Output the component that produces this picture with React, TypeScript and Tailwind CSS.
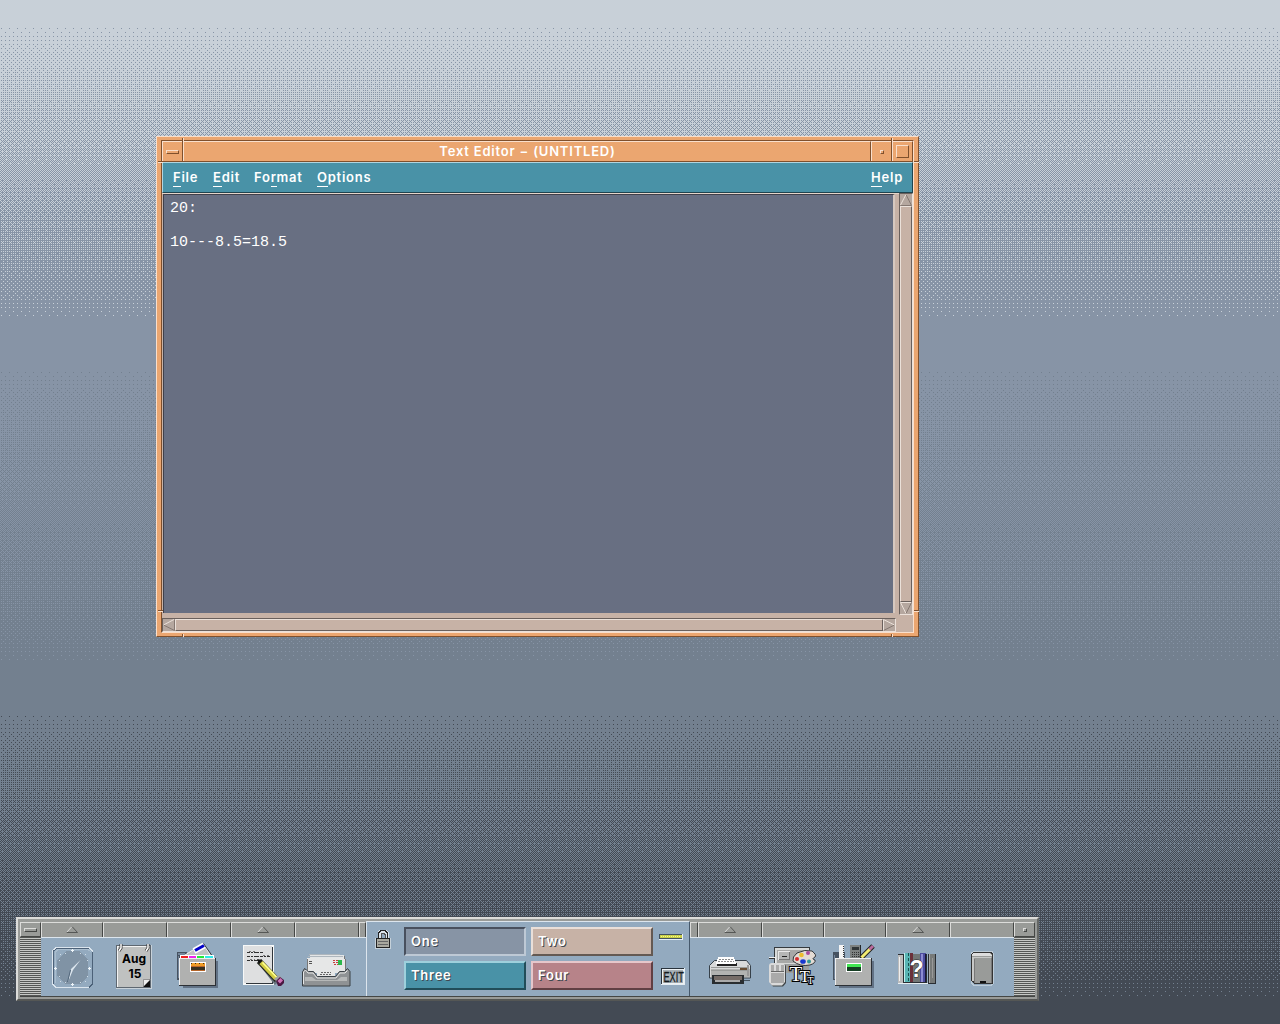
import React from 'react';

const BAYER = [
  [0, 32, 8, 40, 2, 34, 10, 42],
  [48, 16, 56, 24, 50, 18, 58, 26],
  [12, 44, 4, 36, 14, 46, 6, 38],
  [60, 28, 52, 20, 62, 30, 54, 22],
  [3, 35, 11, 43, 1, 33, 9, 41],
  [51, 19, 59, 27, 49, 17, 57, 25],
  [15, 47, 7, 39, 13, 45, 5, 37],
  [63, 31, 55, 23, 61, 29, 53, 21],
];

const BANDS = [
  { from: 22, to: 320, ink: '#8794a6' },
  { from: 366, to: 664, ink: '#73808f' },
  { from: 706, to: 1004, ink: '#434a54' },
];

function ditherPath(from: number, to: number) {
  let d = '';
  for (let y = from; y < 1024; y++) {
    const level = ((y - from) / (to - from)) * 64;
    for (let x = 0; x < 8; x++) {
      if (BAYER[(y + 4) % 8][(x + 7) % 8] < level - 0.5) d += `M${x} ${y}h1v1h-1z`;
    }
  }
  return d;
}

const LAYERS = BANDS.map((b) => ({ ...b, d: ditherPath(b.from, b.to) }));

function Backdrop() {
  return (
    <svg className="absolute inset-0" width="1280" height="1024" shapeRendering="crispEdges">
      <defs>
        <pattern id="dither" width="8" height="1024" patternUnits="userSpaceOnUse">
          <rect width="8" height="1024" fill="#c8d0d8" />
          {LAYERS.map((l) => (
            <path key={l.from} d={l.d} fill={l.ink} />
          ))}
        </pattern>
      </defs>
      <rect width="1280" height="1024" fill="url(#dither)" />
    </svg>
  );
}

function Menu({ pre = '', hot, post, className = '' }: { pre?: string; hot: string; post: string; className?: string }) {
  return (
    <span className={`whitespace-pre ${className}`}>
      {pre}
      <span className="relative inline-block">
        {hot}
        <span className="absolute left-0 right-0 bottom-[-1px] h-px bg-white" />
      </span>
      {post}
    </span>
  );
}

function Arrow({ dir, className = '' }: { dir: 'up' | 'down' | 'left' | 'right'; className?: string }) {
  const L = '#ebe1da';
  const D = '#857872';
  return (
    <svg className={`block shrink-0 ${className}`} width="12" height="12" viewBox="0 0 12 12" fill="none">
      {dir === 'up' && (<><path d="M6 .5L11.5 11.5H.5z" fill="#b5a79f" /><path d="M.5 11.5H11.5L6 .5" stroke={D} /><path d="M.5 11L6 .5" stroke={L} /></>)}
      {dir === 'down' && (<><path d="M.5 .5H11.5L6 11.5z" fill="#b5a79f" /><path d="M11.5 .5L6 11.5" stroke={D} /><path d="M6 11.5L.5 .5H11" stroke={L} /></>)}
      {dir === 'left' && (<><path d="M.5 6L11.5 .5V11.5z" fill="#b5a79f" /><path d="M11.5 .5V11.5L.5 6" stroke={D} /><path d="M.5 6L11 .5" stroke={L} /></>)}
      {dir === 'right' && (<><path d="M.5 .5L11.5 6L.5 11.5z" fill="#b5a79f" /><path d="M.5 11.5L11.5 6" stroke={D} /><path d="M.5 11.5V.5L11.5 6" stroke={L} /></>)}
    </svg>
  );
}

function EditorWindow() {
  return (
    <section className="absolute left-[156px] top-[136px] flex h-[501px] w-[763px] flex-col border border-t-[#f9dfcc] border-l-[#f9dfcc] border-r-[#80502c] border-b-[#80502c] bg-[#eba670] pt-[3px] pr-[4px] pb-[3px] pl-[4px]">
      <div className="flex min-h-0 flex-1 flex-col border border-t-[#80502c] border-l-[#80502c] border-r-[#f9dfcc] border-b-[#f9dfcc]">
        <header className="flex h-[21px] shrink-0 border-b border-[#80502c]">
          <div className="flex w-[21px] items-center justify-center border-t border-l border-r border-t-[#f9dfcc] border-l-[#f9dfcc] border-r-[#80502c]">
            <span className="h-[4px] w-[13px] border border-t-[#f9dfcc] border-l-[#f9dfcc] border-r-[#80502c] border-b-[#80502c]" />
          </div>
          <h1 className="flex flex-1 items-center justify-center border-t border-l border-r border-t-[#f9dfcc] border-l-[#f9dfcc] border-r-[#80502c] pl-px font-['Inter'] text-[13px] leading-none font-semibold tracking-[0.8px] text-white">
            Text Editor − (UNTITLED)
          </h1>
          <div className="flex w-[21px] items-center justify-center border-t border-l border-r border-t-[#f9dfcc] border-l-[#f9dfcc] border-r-[#80502c]">
            <span className="size-[4px] border border-t-[#f9dfcc] border-l-[#f9dfcc] border-r-[#80502c] border-b-[#80502c]" />
          </div>
          <div className="flex w-[21px] items-center justify-center border-t border-l border-r border-t-[#f9dfcc] border-l-[#f9dfcc] border-r-[#80502c]">
            <span className="size-[13px] border border-t-[#f9dfcc] border-l-[#f9dfcc] border-r-[#80502c] border-b-[#80502c]" />
          </div>
        </header>
        <nav className="flex h-[31px] shrink-0 items-start border border-t-[#b2d5df] border-l-[#b2d5df] border-r-[#1f444f] border-b-[#1f444f] bg-[#4992a7] pt-[6px] pr-[9px] pl-[10px] font-['Inter'] text-[13px] leading-[17px] font-semibold tracking-[0.75px] text-white">
          <Menu hot="F" post="ile" className="w-[40px]" />
          <Menu hot="E" post="dit" className="w-[41px]" />
          <Menu pre="Fo" hot="r" post="mat" className="w-[63px]" />
          <Menu hot="O" post="ptions" />
          <Menu hot="H" post="elp" className="ml-auto" />
        </nav>
        <div className="flex min-h-0 flex-1 border-t border-[#e6d5c9] bg-[#c7b2a6] pl-px">
          <div className="flex w-[734px] flex-col">
            <pre className="mr-[1px] h-[419px] border-t border-r-2 border-l border-t-[#40404a] border-l-[#40404a] border-r-[#d6c8bf] bg-[#686f82] pt-[5px] pl-[6px] font-['Liberation_Mono'] text-[15px] leading-[17px] text-white">
              {'20:\n\n10---8.5=18.5'}
            </pre>
            <div className="mt-[5px] -ml-px flex h-[14px] w-[734px] border border-t-[#6a605c] border-l-[#6a605c] border-r-[#ebe1da] border-b-[#ebe1da] bg-[#b5a79f]">
              <Arrow dir="left" />
              <div className="flex-1 border border-t-[#ebe1da] border-l-[#ebe1da] border-r-[#6a605c] border-b-[#6a605c] bg-[#c7b2a6]" />
              <Arrow dir="right" />
            </div>
          </div>
          <div className="-mt-px ml-[3px] flex h-[422px] w-[14px] shrink-0 flex-col border border-t-[#6a605c] border-l-[#6a605c] border-r-[#ebe1da] border-b-[#ebe1da] bg-[#b5a79f]">
            <Arrow dir="up" />
            <div className="flex-1 border border-t-[#ebe1da] border-l-[#ebe1da] border-r-[#6a605c] border-b-[#6a605c] bg-[#c7b2a6]" />
            <Arrow dir="down" />
          </div>
        </div>
      </div>
      <svg className="pointer-events-none absolute -top-px -left-px" width="763" height="501" shapeRendering="crispEdges">
        <path d="M26 1v4M735 1v4M26 497v4M735 497v4M1 25h5M757 25h5M1 474h5M757 474h5" transform="translate(.5 .5)" stroke="#80502c" />
        <path d="M27 1v4M736 1v4M27 497v4M736 497v4M1 26h5M757 26h5M1 475h5M757 475h5" transform="translate(.5 .5)" stroke="#f9dfcc" />
      </svg>
    </section>
  );
}

function Tab({ arrow = false, className }: { arrow?: boolean; className: string }) {
  return (
    <div className={`flex h-full items-start justify-center border-t border-l border-r border-t-[#dcdcda] border-l-[#dcdcda] border-r-[#454745] bg-[#999b98] pt-[3px] ${className}`}>
      {arrow && (
        <svg width="12" height="7" viewBox="0 0 12 7" fill="none">
          <path d="M.5 6.5L6 .5" stroke="#dcdcda" />
          <path d="M6 .5L11.5 6.5H.5" stroke="#555755" />
        </svg>
      )}
    </div>
  );
}

function Icon({ x, w, children }: { x: number; w: number; children: React.ReactNode }) {
  return (
    <svg className="block shrink-0" width={w} height="58" viewBox={`${x} 938 ${w} 58`} fill="none" shapeRendering="crispEdges">
      {children}
    </svg>
  );
}

function Clock() {
  return (
    <Icon x={40} w={62}>
      <path d="M55 947.5H88L91.500 951V984L88 987.500H55L51.500 984V951z" stroke="#dbe5ee" />
      <path d="M52.500 984V951L55.500 948.500H88M91.500 952V984L88 987.500" stroke="#4c6178" />
      <path d="M54.500 983V952L57 949.500H87L90 952" stroke="#a9bdce" />
      <path d="M65 951H79L87 960V976L79 984H65L56 976V960z" fill="#8093a5" />
      <path d="M71.500 949v3M70 950.500h3M71.500 983v3M70 984.500h3M54.500 967v3M53 968.500h3M88.500 967v3M87 968.500h3" stroke="#f0f6fa" />
      <path d="M64 953h1v1h-1zM79 953h1v1h-1zM58 960h1v1h-1zM86 960h1v1h-1zM58 976h1v1h-1zM86 976h1v1h-1zM64 982h1v1h-1zM79 982h1v1h-1zM59 954h1v1h-1zM84 954h1v1h-1zM59 981h1v1h-1zM84 981h1v1h-1z" fill="#d0dce6" />
      <g shapeRendering="auto">
        <path d="M79.500 960L72 970L67 982L70 969z" fill="#dce6ee" />
        <path d="M66.500 982L69.500 970" stroke="#52677c" />
      </g>
    </Icon>
  );
}

function Calendar() {
  return (
    <Icon x={103} w={64}>
      <path d="M116 945h36v44h-36z" fill="#c8d2da" />
      <path d="M116 945h35v43h-35z" fill="#5e6770" />
      <path d="M117 946h33v41h-33z" fill="#bfc1c0" />
      <path d="M117.500 987V946.500H150" stroke="#f3f3f3" />
      <g shapeRendering="auto">
        <path d="M121 944v4l-2 3M148 944v4l-2 3" stroke="#333" strokeWidth="3" />
        <path d="M121 944v4l-2 3M148 944v4l-2 3" stroke="#fff" strokeWidth="1.5" />
        <path d="M150 979V987H143z" fill="#111" />
        <path d="M143.500 986.500V979.500H150.500z" fill="#eee" stroke="#777" strokeWidth=".7" />
      </g>
      <g fill="#000" fontFamily="Inter" fontWeight="700" fontSize="12" textAnchor="middle">
        <text x="134" y="963">Aug</text>
        <text x="135" y="978">15</text>
      </g>
    </Icon>
  );
}

function Cabinet() {
  return (
    <Icon x={167} w={64}>
      <path d="M177 952h10v28h-10z" fill="#465260" />
      <path d="M183 961h35v27h-35z" fill="#627285" />
      <path d="M178 953h7v2h-7zM178 956h1v22h-1z" fill="#73859a" />
      <g shapeRendering="auto">
        <path d="M182 957L203 943.500L212 958z" fill="#c1c2c3" stroke="#eee" />
        <path d="M203.500 943.500L213 957" stroke="#34393e" />
        <path d="M194 951L204 945.500" stroke="#fff" strokeWidth="6" />
        <path d="M195 950.500L204 945.500" stroke="#0000c8" strokeWidth="3" />
      </g>
      <path d="M180 955h34v3h-34z" fill="#fff" />
      <path d="M181 956h7v2h-7z" fill="#f01d1d" /><path d="M189 956h7v2h-7z" fill="#ed24ea" /><path d="M197 956h7v2h-7z" fill="#22e83a" /><path d="M205 956h8v2h-8z" fill="#31e8e8" />
      <path d="M179 958h37v28h-37z" fill="#2c3035" /><path d="M179 958h36v27h-36z" fill="#eee" /><path d="M180 959h35v26h-35z" fill="#b0b1b0" />
      <path d="M190 962h16v10h-16z" fill="#fff" /><path d="M191 963h14v8h-14z" fill="#ef9b26" />
      <path d="M191 963h1v1h-1zM195 963h1v1h-1zM199 963h1v1h-1zM203 963h1v1h-1zM191 967h14v4h-14z" fill="#39301e" />
      <path d="M191 966.500h14M191 970.500h14" stroke="#b5662a" />
    </Icon>
  );
}

function Notes() {
  return (
    <Icon x={231} w={64}>
      <path d="M243 945h31v40h-31z" fill="#f6f8f8" /><path d="M272 947h1v37h-27v-1h26z" fill="#30353a" /><path d="M244 946h28v37h-28z" fill="#dedfe0" />
      <path d="M247 952.500h17M247 956.500h23M247 960.500h12" stroke="#303030" strokeDasharray="3 1 2 1 5 1" />
      <path d="M249 951.500h7M263 955.500h8M250 959.500h5" stroke="#777" strokeDasharray="2 2" />
      <g shapeRendering="auto">
        <path d="M263 967L276 984" stroke="#67737d" strokeWidth="3" />
        <path d="M259 961L277 980" stroke="#23251f" strokeWidth="6" />
        <path d="M261 962.500L276 978.500" stroke="#d2cd43" strokeWidth="4.500" /><path d="M262.500 962.500L277 977.500" stroke="#ffff90" strokeWidth="1.700" />
        <path d="M257 959l5 1-3 4z" fill="#111" />
        <path d="M274 979l5-4 3 3-5 4z" fill="#a0a2a4" />
        <path d="M276 981l4-4 4 3v3l-3 3h-3z" fill="#4b1842" /><path d="M277.500 981l3-3 2.500 2.500-3 3z" fill="#ce72b7" />
      </g>
    </Icon>
  );
}

function Mail() {
  return (
    <Icon x={295} w={71}>
      <path d="M310 955h34v12h-34z" fill="#e4e6e7" /><path d="M308 956.500h35M309 954.500h31" stroke="#aeb6bd" />
      <path d="M307 958h38v15h-38z" fill="#e6e7e7" /><path d="M345.500 959v12M344.500 956v3M307.500 959v11" stroke="#777" />
      <path d="M309 961.500h4M309 963.500h3" stroke="#555" strokeDasharray="3 1" />
      <path d="M333 960.500h5M333 962.500h5M334 964.500h4" stroke="#c93c3c" strokeDasharray="2 1" /><path d="M338 960h4v5h-4z" fill="#2bb74c" />
      <g shapeRendering="auto">
        <path d="M302.500 986V972L304.500 968.500L308.500 971.500H313.500L317.500 976.500H335.500L339.500 971.500H344.500L347.500 968.500L350 971.500V986z" fill="#8f9294" stroke="#3a4045" />
        <path d="M303.500 984V972L305.500 970L308 973H313L317 978H336L340 973H345L347.500 970.500" stroke="#e6e6e5" />
        <path d="M305 981V977H312L316 980H337L341 977H347V981z" fill="#b6b8b8" />
      </g>
      <path d="M317 970h18v6h-18z" fill="#e6e7e7" /><path d="M321 972.500h10M320 974.500h11" stroke="#666" strokeDasharray="2 1" />
    </Icon>
  );
}

function Printer() {
  return (
    <Icon x={690} w={73}>
      <g shapeRendering="auto">
        <path d="M709.500 978V965.500L714.500 960.500H746.500L750.500 965.500V978z" fill="#d9dada" stroke="#37414a" />
      </g>
      <path d="M711 969h39v8h-39z" fill="#b2b3b1" /><path d="M717 963h20v3h-20z" fill="#222" />
      <path d="M718 957h16l2 7h-20z" fill="#fff" /><path d="M719 959.500h14M718 961.500h16" stroke="#8b8b8b" strokeDasharray="2 1" />
      <path d="M711 967.500h38M711 970.500h38" stroke="#999b99" /><path d="M740 968h7v2h-7z" fill="#684d33" />
      <path d="M747 965h2v11h-2z" fill="#999" />
      <path d="M712 975h32v9h-32z" fill="#292d30" /><path d="M714 976h28v4h-28z" fill="#756c67" /><path d="M715 980h25v2h-25z" fill="#aaa" />
      <path d="M744 980.500h6" stroke="#465562" />
    </Icon>
  );
}

function StyleManager() {
  return (
    <Icon x={763} w={62}>
      <path d="M774 947h36v17h-36z" fill="#353a3e" /><path d="M775 948h34v16h-34z" fill="#d8dad9" /><path d="M777 950h31v13h-31z" fill="#a7a8a7" />
      <path d="M778 951h12v9h-12z" fill="#e8e8e8" /><path d="M779 952h11v8h-11z" fill="#777" /><path d="M779 952h10v7h-10z" fill="#b5b6b5" /><path d="M782 956.500h5" stroke="#222" />
      <path d="M784 964h25v9h-25z" fill="#9c9e9e" />
      <path d="M769 957.500h7M775.500 958v5" stroke="#eee" /><path d="M769 958.500h6" stroke="#333" />
      <g shapeRendering="auto">
        <path d="M770 967Q770 964 773 964H783Q786 964 786 967V983L783 986.500H773L770 983z" fill="#414649" /><path d="M769 966Q769 963 772 963H782Q785 963 785 966V982L782 985.500H772L769 982z" fill="#dadada" />
      </g>
      <path d="M771 965h3v6h-3zM776 965h3v6h-3zM781 965h3v6h-3zM771 973h13v10h-13z" fill="#aaa" />
      <path d="M771 971.500h13" stroke="#666" />
      <g shapeRendering="auto">
        <path d="M793 961Q792 957 797 953Q805 949 812 951Q817 955 815 957Q811 959 815 960Q816 963 810 965Q800 967 793 961z" fill="#e3dbd4" stroke="#303438" />
        <circle cx="797" cy="959" r="2" fill="#d42d2d" /><circle cx="801.500" cy="955" r="2.300" fill="#edbc2d" /><circle cx="808" cy="953" r="2" fill="#a9499c" /><ellipse cx="803" cy="961.500" rx="2.800" ry="2.300" fill="#1838cf" /><circle cx="809" cy="961.500" r="2" fill="#339795" />
      </g>
      <g fill="#fff" stroke="#000" strokeWidth="2" paintOrder="stroke" fontFamily="Liberation Serif" fontWeight="400">
        <text x="789.500" y="980.500" fontSize="21">T</text><text x="799.500" y="982" fontSize="17">T</text><text x="807.500" y="983.500" fontSize="10">T</text>
      </g>
    </Icon>
  );
}

function Applications() {
  return (
    <Icon x={825} w={62}>
      <path d="M833 952h12v28h-12z" fill="#465260" /><path d="M834 955h1v24h-1z" fill="#73859a" />
      <path d="M839 961h35v27h-35z" fill="#627285" />
      <path d="M839 945h5v13h-5z" fill="#f4f4f4" /><path d="M843.500 946v12" stroke="#333" strokeDasharray="1 1" />
      <path d="M850 945h11v13h-11z" fill="#24282b" /><path d="M850 945h10v13h-10z" fill="#7d8180" /><path d="M852 947h7v3h-7z" fill="#303638" /><path d="M852 952.500h7M852 954.500h7M852 956.500h7" stroke="#333" strokeDasharray="1 1" />
      <g shapeRendering="auto">
        <path d="M861 958L873 946" stroke="#222" strokeWidth="5" /><path d="M861.500 957.500L870 949" stroke="#f2ed72" strokeWidth="3" /><path d="M869.500 949.500L873 946" stroke="#ba6a9f" strokeWidth="3" />
      </g>
      <path d="M835 958h37v28h-37z" fill="#2c3035" /><path d="M835 958h36v27h-36z" fill="#eee" /><path d="M836 959h35v26h-35z" fill="#b0b1b0" />
      <path d="M846 963h16v9h-16z" fill="#fff" /><path d="M847 964h14v3h-14z" fill="#42e653" /><path d="M847 967h14v4h-14z" fill="#153e23" />
    </Icon>
  );
}

function Help() {
  return (
    <Icon x={888} w={64}>
      <path d="M899 954h38v30h-38z" fill="#2a2e33" />
      <path d="M899 955h5v28h-5z" fill="#bbb" /><path d="M900.500 957v24" stroke="#eee" />
      <path d="M905 953h6v29h-6z" fill="#58b5b4" /><path d="M905.500 953v29" stroke="#c4eeee" /><path d="M909.500 953v29" stroke="#154f50" strokeDasharray="3 2" />
      <path d="M911 953h3v29h-3z" fill="#6b303a" />
      <path d="M914 954h7v28h-7z" fill="#717675" />
      <path d="M921 953h6v29h-6z" fill="#4c4c9d" /><path d="M922 954h2v28h-2z" fill="#8c8bd2" /><path d="M926.500 954v28" stroke="#17173c" />
      <path d="M928 953h1v30h-1z" fill="#93aabf" />
      <path d="M930 954h6v29h-6z" fill="#777a79" /><path d="M930.500 954v29" stroke="#aaa" /><path d="M933 958h1v20h-1z" fill="#999" />
      <path d="M899 983.500h30" stroke="#e8eff3" />
      <text x="917.500" y="977" fill="#fff" stroke="#222" strokeWidth="1" paintOrder="stroke" fontFamily="Liberation Sans" fontWeight="700" fontSize="23" textAnchor="middle">?</text>
    </Icon>
  );
}

function Trash() {
  return (
    <Icon x={951} w={62}>
      <path d="M971.500 953L973.500 951.500H992L993.500 954V983L991 985.500H974L971.500 983z" stroke="#bccbd7" />
      <path d="M971 954L973 952H991L993 954V984H975L971 981z" fill="#333" />
      <path d="M972 954L974 953H990L992 955V983H975L972 980z" fill="#999b99" />
      <path d="M972 954L974 953H990L992 956H972z" fill="#ddd" /><path d="M973 957h18v1h-18zM972 957h2v24h-2z" fill="#c7c8c7" />
      <path d="M974.500 959V983M991.500 958V983" stroke="#777" /><path d="M980 981h6v2h-6z" fill="#111" />
    </Icon>
  );
}

function Grip({ kind }: { kind: 'menu' | 'min' }) {
  return (
    <div className="flex w-[21px] flex-col">
      <div className="flex h-[15px] items-center justify-center border border-t-[#dcdcda] border-l-[#dcdcda] border-r-[#454745] border-b-[#454745] bg-[#999b98]">
        <span className={`border border-t-[#dcdcda] border-l-[#dcdcda] border-r-[#454745] border-b-[#454745] ${kind === 'menu' ? 'h-[4px] w-[13px]' : 'size-[4px]'}`} />
      </div>
      <div className="flex-1 bg-[repeating-linear-gradient(to_bottom,#545654_0px,#545654_1px,#c6c8c5_1px,#c6c8c5_2px)]" />
    </div>
  );
}

function Workspace({ name, className }: { name: string; className: string }) {
  return (
    <button className={`flex h-[29px] w-[122px] items-center border-2 pl-[5px] text-left font-['Inter'] text-[13px] leading-none font-semibold tracking-[0.75px] text-white [text-shadow:1px_1px_0_#404850] ${className}`}>
      {name}
    </button>
  );
}

function FrontPanel() {
  return (
    <section className="absolute top-[917px] left-[16px] flex h-[84px] w-[1023px] border-2 border-t-[#dcdcda] border-l-[#dcdcda] border-r-[#656765] border-b-[#555755] bg-[#999b98] px-[2px] pt-[3px] pb-[2px]">
      <div className="flex flex-1 border-b border-[#454745]">
        <Grip kind="menu" />
        <div className="flex w-[325px] flex-col">
          <div className="flex h-[15px]">
            <Tab arrow className="w-[62px]" />
            <Tab className="w-[64px]" />
            <Tab className="w-[64px]" />
            <Tab arrow className="w-[64px]" />
            <Tab className="w-[64px]" />
            <Tab className="w-[7px]" />
          </div>
          <div className="flex flex-1 border-t border-[#dce5ed] bg-[#93aabf]">
            <Clock />
            <Calendar />
            <Cabinet />
            <Notes />
            <Mail />
          </div>
        </div>
        <div className="-mt-px flex w-[324px] border-t border-l border-r border-t-[#dce5ed] border-l-[#dce5ed] border-r-[#45586b] bg-[#93aabf]">
          <svg className="mt-[7px] ml-[8px] shrink-0" width="16" height="20" viewBox="375 929 16 20" fill="none" shapeRendering="crispEdges">
            <path d="M375 938h16v11h-16z" fill="#c5d1da" /><path d="M379 939V933L381 931H385L387 933V939" stroke="#dde4ea" strokeWidth="3" />
            <path d="M378.500 939V933L381 930.500H385L387.500 933V939" stroke="#222" /><path d="M381.500 938V934L383 933H384L385.500 935V938" stroke="#555" />
            <path d="M376 938h14v10h-14z" fill="#222" /><path d="M377 939h12v8h-12z" fill="#aaa99f" /><path d="M378 941.500h10M378 944.500h10" stroke="#666" />
          </svg>
          <div className="mt-[5px] ml-[13px] grid h-[63px] grid-cols-[122px_122px] content-between gap-x-[5px]">
            <Workspace name="One" className="border-t-[#48505e] border-r-[#bec9d5] border-b-[#bec9d5] border-l-[#48505e] bg-[#8794a5]" />
            <Workspace name="Two" className="border-t-[#e9dfd9] border-r-[#645952] border-b-[#645952] border-l-[#e9dfd9] bg-[#c7b2a6]" />
            <Workspace name="Three" className="border-t-[#9ed0dc] border-r-[#214d59] border-b-[#214d59] border-l-[#9ed0dc] bg-[#4992a7]" />
            <Workspace name="Four" className="border-t-[#e6c7cb] border-r-[#613f43] border-b-[#613f43] border-l-[#e6c7cb] bg-[#b78389]" />
          </div>
          <svg className="mt-[10px] ml-[6px] shrink-0" width="27" height="56" viewBox="659 932 27 56">
            <g shapeRendering="crispEdges">
              <path d="M659 934h24v6h-24z" fill="#e5eef4" /><path d="M659 934h23v5h-23z" fill="#41515e" /><path d="M660 935h22v3h-22z" fill="#c9cf4a" />
              <path d="M661 936.500h20" stroke="#f8ff82" strokeDasharray="1 1" />
              <path d="M661 968h24v17h-24z" fill="#e6edf2" /><path d="M661 968h23v16h-23z" fill="#29333c" /><path d="M662 969h22v15h-22z" fill="#edf1f4" /><path d="M663 970h20v13h-20z" fill="#a9b2b8" />
            </g>
            <text transform="translate(663.5 982) scale(.59 1)" fill="#151a1e" stroke="#151a1e" strokeWidth=".3" fontFamily="Liberation Sans" fontSize="15.500">EXIT</text>
          </svg>
        </div>
        <div className="flex flex-1 flex-col">
          <div className="flex h-[15px]">
            <Tab className="w-[8px]" />
            <Tab arrow className="w-[64px]" />
            <Tab className="w-[62px]" />
            <Tab className="w-[62px]" />
            <Tab arrow className="w-[64px]" />
            <Tab className="flex-1" />
          </div>
          <div className="flex flex-1 border-t border-[#dce5ed] bg-[#93aabf]">
            <Printer />
            <StyleManager />
            <Applications />
            <Help />
            <Trash />
          </div>
        </div>
        <Grip kind="min" />
      </div>
    </section>
  );
}

export default function App() {
  return (
    <main className="relative h-[1024px] w-[1280px] overflow-hidden">
      <Backdrop />
      <EditorWindow />
      <FrontPanel />
    </main>
  );
}
